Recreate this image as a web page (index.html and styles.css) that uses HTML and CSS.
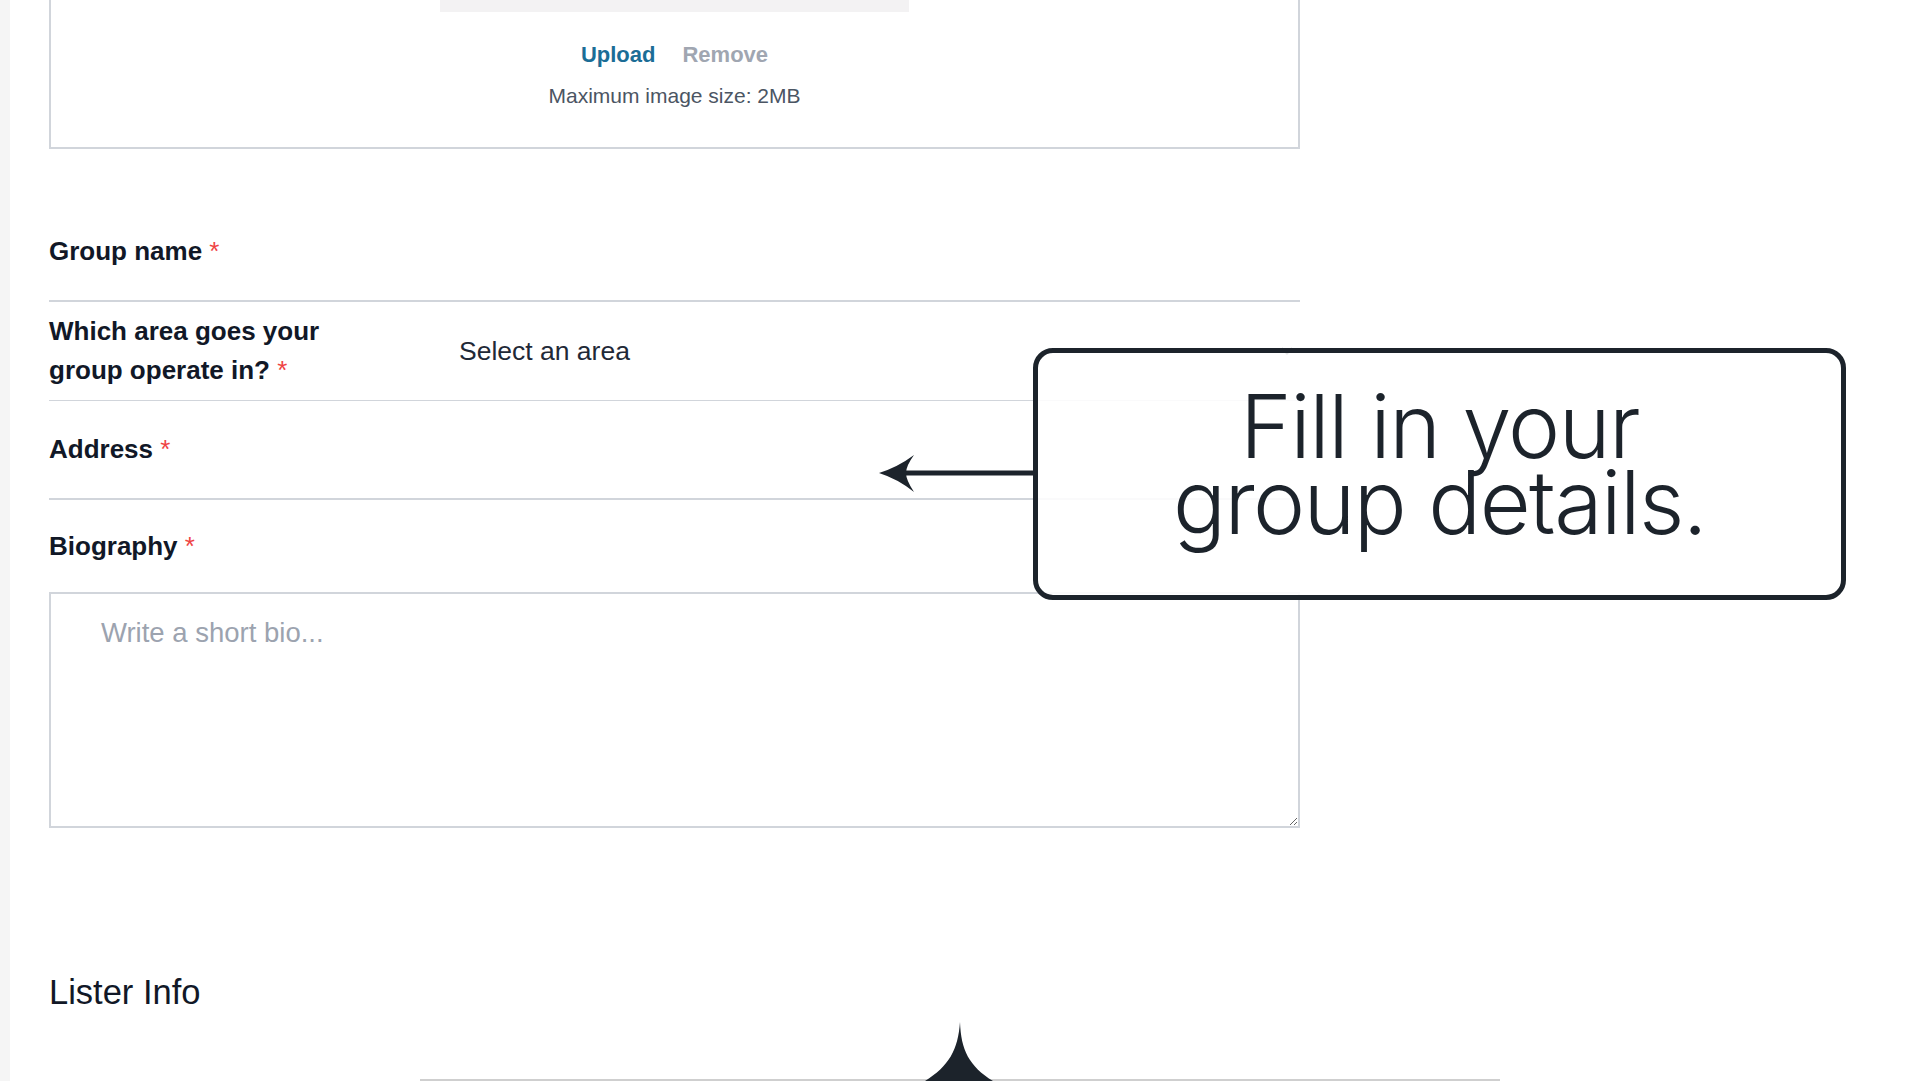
FILE: index.html
```html
<!DOCTYPE html>
<html lang="en">
<head>
  <meta charset="UTF-8">
  <title>Group details</title>
  <link rel="stylesheet" href="styles.css">
</head>
<body>

  <div class="page">
    <form class="form">

      <div class="photo-card">
        <div class="photo-preview"></div>
        <div class="photo-actions">
          <a class="upload">Upload</a>
          <a class="remove">Remove</a>
        </div>
        <div class="photo-note">Maximum image size: 2MB</div>
      </div>

      <div class="fields">
        <div class="field-row">
          <label>Group name <span class="req">*</span></label>
          <div></div>
        </div>
        <div class="field-row thin">
          <label>Which area goes your<br>group operate in? <span class="req">*</span></label>
          <div class="select">
            <span>Select an area</span>
            <svg class="chevron" width="12" height="8" viewBox="0 0 12 8">
              <path d="M1 1.5 L6 6.5 L11 1.5" fill="none" stroke="#1f2937" stroke-width="2"/>
            </svg>
          </div>
        </div>
        <div class="field-row">
          <label>Address <span class="req">*</span></label>
          <div></div>
        </div>
      </div>

      <label class="bio-label">Biography <span class="req">*</span></label>
      <textarea class="bio" placeholder="Write a short bio..."></textarea>

      <h2 class="section-title">Lister Info</h2>
      <div class="lister-card"></div>
    </form>

    <!-- tutorial overlay -->
    <svg class="arrow" width="160" height="46" viewBox="0 0 160 46">
      <line x1="28" y1="23" x2="160" y2="23" stroke="#1c232b" stroke-width="5"/>
      <path d="M3 23 Q22 17 38 5 Q30 16 30 23 Q30 30 38 42 Q22 29 3 23 Z" fill="#1c232b"/>
    </svg>
    <div class="callout">Fill in your<br>group details.</div>
    <svg class="spike" width="68" height="59" viewBox="0 0 68 59">
      <path d="M35 0 C36 28 44 44 68 59 L0 59 C24 44 33 28 35 0 Z" fill="#1c232b"/>
    </svg>
  </div>

</body>
</html>
```

FILE: styles.css
```css
html, body {
  overflow: hidden;
}

body {
  margin: 0;
  background: #f5f5f5;
  font-family: 'Liberation Sans', Arial, sans-serif;
  color: #111827;
}

.page {
  display: flow-root;
  position: relative;
  margin-left: 10px;
  padding: 0 39px;
  min-height: 100vh;
  background: #fff;
}

.form {
  width: 1251px;
}

.photo-card {
  margin-top: -220px;
  padding: 30px 0 39px;
  border: 2px solid #d1d5db;
  text-align: center;
}

.photo-preview {
  width: 469px;
  height: 200px;
  margin: 0 auto;
  background: #f3f2f3;
}

.photo-actions {
  display: flex;
  justify-content: center;
  gap: 27px;
  margin-top: 30px;
  font-size: 22px;
  line-height: 26px;
  font-weight: bold;
}

.upload {
  color: #1b6d96;
}

.remove {
  color: #a0a6b1;
}

.photo-note {
  margin-top: 16px;
  font-size: 21px;
  line-height: 24px;
  color: #4b5563;
}

.fields {
  margin-top: 54px;
}

.field-row {
  display: grid;
  grid-template-columns: 410px 1fr;
  align-items: center;
  box-sizing: border-box;
  min-height: 99px;
  border-bottom: 2px solid #d1d5db;
}

.field-row.thin {
  border-bottom-width: 1px;
}

label {
  font-size: 26px;
  line-height: 39px;
  font-weight: bold;
}

.req {
  color: #ef4444;
  font-weight: normal;
}

.select {
  display: flex;
  justify-content: space-between;
  align-items: center;
  padding-right: 7px;
  font-size: 26.5px;
  color: #1f2937;
}

.bio-label {
  display: block;
  margin-top: 27px;
}

.bio {
  display: block;
  box-sizing: border-box;
  width: 100%;
  height: 236px;
  margin-top: 26px;
  padding: 23px 50px;
  border: 2px solid #d1d5db;
  border-radius: 0;
  font-family: 'Liberation Sans', Arial, sans-serif;
  font-size: 27.5px;
  color: #111827;
}

.bio::placeholder {
  color: #9ca3af;
}

.section-title {
  margin: 144px 0 0;
  font-size: 34.5px;
  line-height: 40px;
  font-weight: normal;
}

.lister-card {
  width: 1080px;
  margin: 67px 0 0 371px;
  border-top: 2px solid #cfcfcf;
}

.arrow {
  position: absolute;
  left: 866px;
  top: 450px;
}

.callout {
  position: absolute;
  left: 1023px;
  top: 348px;
  box-sizing: border-box;
  width: 813px;
  height: 252px;
  padding-top: 36px;
  border: 5px solid #1c232b;
  border-radius: 20px;
  background: rgba(255, 255, 255, 0.88);
  font-family: Inter, 'Noto Sans', sans-serif;
  font-size: 88px;
  font-weight: 300;
  line-height: 75.6px;
  letter-spacing: -1.6px;
  text-align: center;
  color: #1c232b;
}

.spike {
  position: absolute;
  left: 915px;
  top: 1022px;
}
```
